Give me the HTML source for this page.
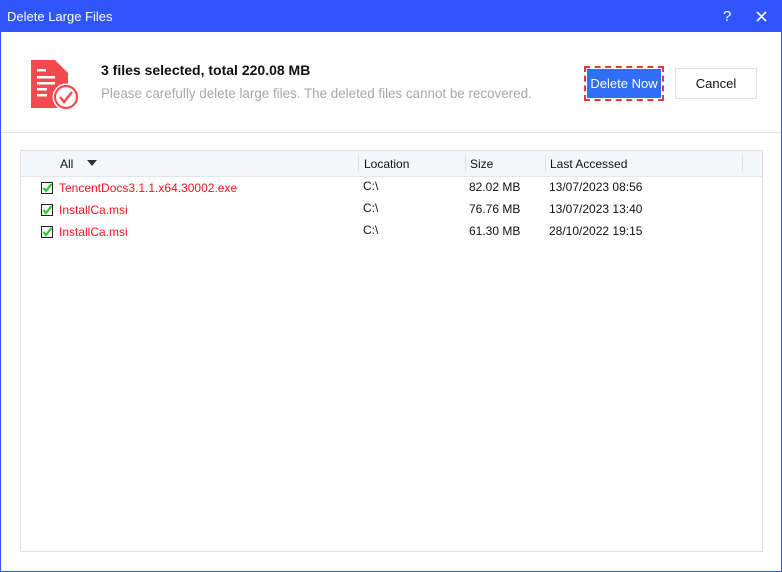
<!DOCTYPE html><html><head><style>
body{margin:0;width:782px;height:572px;overflow:hidden;font-family:"Liberation Sans",sans-serif;background:#fff}
.win{position:absolute;left:0;top:0;width:780px;height:570px;border:1px solid #2f55fe;background:#fff}
.tb{position:absolute;left:0;top:0;width:780px;height:31px;background:#2f55fe;color:#fff;font-size:13px}
.t{position:absolute;font-size:12px;white-space:nowrap}
</style></head><body><div class="win">
<div class="tb"><span style="position:absolute;left:6px;top:8px">Delete Large Files</span>
<span style="position:absolute;left:722px;top:7px;font-size:15px">?</span>
<svg style="position:absolute;left:755px;top:10px" width="11" height="11"><path d="M1 1L10 10M10 1L1 10" stroke="#fff" stroke-width="1.6"/></svg></div>
<svg style="position:absolute;left:30px;top:59px" width="48" height="52">
<path d="M0 0H24L37 13V48H0Z" fill="#f34a4f"/>
<rect x="6" y="9" width="9" height="2.5" fill="#fff"/><rect x="6" y="16" width="18" height="2.5" fill="#fff"/><rect x="6" y="22" width="18" height="2.5" fill="#fff"/><rect x="6" y="28" width="10" height="2.5" fill="#fff"/><rect x="6" y="34" width="10" height="2.5" fill="#fff"/>
<circle cx="35" cy="37" r="13.5" fill="#fff"/><circle cx="35" cy="37" r="11" fill="none" stroke="#f34a4f" stroke-width="2.2"/>
<path d="M29 37L33 42L41 32" fill="none" stroke="#f34a4f" stroke-width="2.4"/></svg>
<div class="t" style="left:100px;top:61px;font-size:14px;font-weight:bold;color:#111">3 files selected, total 220.08 MB</div>
<div class="t" style="left:100px;top:85px;color:#a8a8a8;font-size:13.4px">Please carefully delete large files. The deleted files cannot be recovered.</div>
<div style="position:absolute;left:583px;top:65px;width:80px;height:35px;border:2px dashed #e8334a;box-sizing:border-box;padding:1px"><div style="background:#2f6ff8;height:29px;color:#fff;font-size:13px;text-align:center;line-height:29px">Delete Now</div></div>
<div style="position:absolute;left:674px;top:67px;width:82px;height:31px;border:1px solid #ddd;box-sizing:border-box;font-size:13px;text-align:center;line-height:29px;color:#111">Cancel</div>
<div style="position:absolute;left:0;top:131px;width:780px;height:1px;background:#e6e6e6"></div>
<div style="position:absolute;left:19px;top:149px;width:741px;height:400px;border:1px solid #dde1e8">
<div style="position:absolute;left:0;top:0;width:741px;height:25px;background:#f4f6f9;border-bottom:1px solid #e3e6ec"></div>
<div class="t" style="left:39px;top:6px;color:#111">All</div>
<svg style="position:absolute;left:66px;top:9px" width="10" height="6"><path d="M0 0H10L5 6Z" fill="#333"/></svg>
<div style="position:absolute;left:337px;top:4px;width:1px;height:17px;background:#e0e0e0"></div>
<div style="position:absolute;left:444px;top:4px;width:1px;height:17px;background:#e0e0e0"></div>
<div style="position:absolute;left:524px;top:4px;width:1px;height:17px;background:#e0e0e0"></div>
<div style="position:absolute;left:721px;top:4px;width:1px;height:17px;background:#e0e0e0"></div>
<div class="t" style="left:343px;top:6px;color:#111">Location</div>
<div class="t" style="left:449px;top:6px;color:#111">Size</div>
<div class="t" style="left:529px;top:6px;color:#111">Last Accessed</div>
</div>
<svg width="0" height="0" style="position:absolute"><defs><g id="cb"><rect x="0.5" y="0.5" width="11" height="11" fill="#fff" stroke="#222"/><path d="M2.5 6L5 9L10.5 2" fill="none" stroke="#2ec42e" stroke-width="2.2"/></g></defs></svg>
<svg style="position:absolute;left:40px;top:181px" width="12" height="12"><use href="#cb"/></svg>
<svg style="position:absolute;left:40px;top:203px" width="12" height="12"><use href="#cb"/></svg>
<svg style="position:absolute;left:40px;top:225px" width="12" height="12"><use href="#cb"/></svg>
<div class="t" style="left:58px;top:180px;color:#f2141c">TencentDocs3.1.1.x64.30002.exe</div>
<div class="t" style="left:58px;top:202px;color:#f2141c">InstallCa.msi</div>
<div class="t" style="left:58px;top:224px;color:#f2141c">InstallCa.msi</div>
<div class="t" style="left:362px;top:178px;color:#111">C:\</div>
<div class="t" style="left:362px;top:200px;color:#111">C:\</div>
<div class="t" style="left:362px;top:222px;color:#111">C:\</div>
<div class="t" style="left:468px;top:179px;color:#111">82.02 MB</div>
<div class="t" style="left:468px;top:201px;color:#111">76.76 MB</div>
<div class="t" style="left:468px;top:223px;color:#111">61.30 MB</div>
<div class="t" style="left:548px;top:179px;color:#111">13/07/2023 08:56</div>
<div class="t" style="left:548px;top:201px;color:#111">13/07/2023 13:40</div>
<div class="t" style="left:548px;top:223px;color:#111">28/10/2022 19:15</div>
</div></body></html>
